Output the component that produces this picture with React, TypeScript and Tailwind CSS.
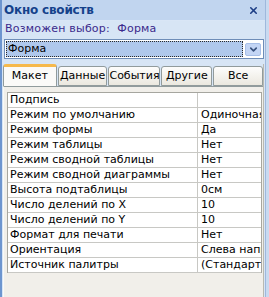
import { ChevronDown, X } from 'lucide-react';

const rows: [string, string][] = [
  ['Подпись', ''],
  ['Режим по умолчанию', 'Одиночная форма'],
  ['Режим формы', 'Да'],
  ['Режим таблицы', 'Нет'],
  ['Режим сводной таблицы', 'Нет'],
  ['Режим сводной диаграммы', 'Нет'],
  ['Высота подтаблицы', '0см'],
  ['Число делений по X', '10'],
  ['Число делений по Y', '10'],
  ['Формат для печати', 'Нет'],
  ['Ориентация', 'Слева направо'],
  ['Источник палитры', '(Стандартная)'],
];

const tabs = ['Макет', 'Данные', 'События', 'Другие', 'Все'];
const tabWidths = ['w-[54px]', 'w-[50px]', 'w-[52px]', 'w-[51px]', 'w-[50px]'];

const App = () => {
  return (
    <div
      className="w-[269px] h-[297px] bg-[#c9daf0] overflow-hidden flex"
      style={{ fontFamily: 'Tahoma, "DejaVu Sans", sans-serif' }}
    >
      <div className="w-[266px] h-full flex flex-col border-l-2 border-[#6d95cf] border-r border-r-[#9fb8dc] bg-[#d7e5f5]">
        {/* Title */}
        <div className="h-[21px] flex items-center justify-between pl-[2px] pr-[6px] bg-[#c1d5ef] border-b border-[#d9e6f6]">
          <span className="text-[12px] font-bold text-[#15428b] tracking-[-0.2px]">Окно свойств</span>
          <X size={11} strokeWidth={3.5} className="text-[#1e3f86]" />
        </div>

        {/* Selection */}
        <div className="h-[17px] pl-[3px] flex items-center text-[11px] text-[#3b2a8c] tracking-[0.2px]">
          Возможен выбор:&nbsp; Форма
        </div>

        {/* Combo */}
        <div className="mt-[1px] ml-[2px] mr-[1px] h-[20px] flex items-center border border-[#6e8db8] bg-white p-[1px]">
          <div className="flex-1 h-full bg-[#afc8ec] border border-dotted border-[#2a2a2a] flex items-center pl-[1px] text-[11px] text-black">
            Форма
          </div>
          <div className="w-[16px] h-[13px] ml-[2px] mr-[1px] bg-[#c3d5f5] border border-[#a7bfe8] rounded-[2px] flex items-center justify-center">
            <ChevronDown size={11} strokeWidth={3.5} className="text-[#39527e]" />
          </div>
        </div>

        {/* Tabs panel */}
        <div className="mt-[5px] ml-[1px] mr-[1px] flex-1 flex flex-col bg-[#f1efea] border-r border-[#b9b9b1]">
          <div className="h-[22px] flex items-end bg-[#d7e5f5]">
            {tabs.map((t, i) => (
              <div
                key={t}
                className={`${tabWidths[i]} flex items-center justify-center text-[11px] text-black ${
                  i === 0
                    ? 'h-[22px] bg-[#fbfaf8] border border-b-0 border-[#919b9c] border-t-[3px] border-t-[#f6b94c] rounded-t-[3px] z-10'
                    : 'h-[20px] ml-[1px] bg-gradient-to-b from-[#fdfdfc] to-[#ebe8df] border border-[#919b9c] rounded-t-[3px]'
                }`}
              >
                {t}
              </div>
            ))}
          </div>
          <div className="flex-1 border-t border-[#919b9c] border-l border-l-[#f9f9f7] pt-[5px] pl-[3px] pr-[1px]">
            <div className="border border-[#a6a69f] border-b-0 bg-white text-[11px] text-black">
              {rows.map(([k, v], i) => (
                <div key={i} className="flex h-[15px] border-b border-[#c8c8c4]">
                  <div className="w-[190px] pl-[2px] border-r border-[#c8c8c4] leading-[14px] whitespace-nowrap overflow-hidden">
                    {k}
                  </div>
                  <div className="flex-1 min-w-0 pl-[3px] leading-[14px] whitespace-nowrap overflow-hidden">{v}</div>
                </div>
              ))}
            </div>
          </div>
        </div>
      </div>
    </div>
  );
};

export default App;
